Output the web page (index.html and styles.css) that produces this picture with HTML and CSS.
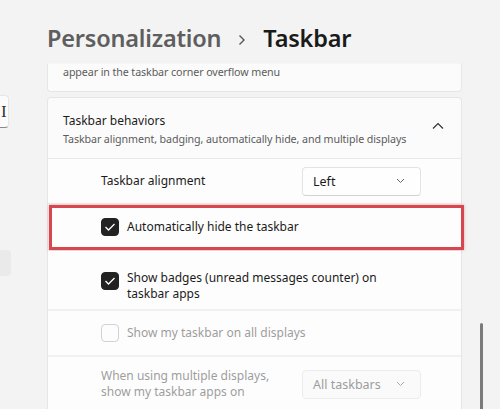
FILE: index.html
```html
<!DOCTYPE html>
<html lang="en">
<head>
	<meta charset="UTF-8">
	<title>Taskbar</title>
	<link rel="stylesheet" href="styles.css">
</head>
<body>
	<div class="page">
		<div class="sidebar">
			<div class="search"><span class="caret">I</span></div>
			<div class="nav-item"></div>
		</div>
		<div class="main">
			<h1 class="crumbs">
				<span class="parent">Personalization</span>
				<svg class="crumb-sep" width="8" height="12" viewBox="0 0 8 12"><path d="M1.5 1.5 L6 6 L1.5 10.5" fill="none" stroke="#555" stroke-width="1.4"/></svg>
				<span class="current">Taskbar</span>
			</h1>
			<div class="card card-cut">
				<p class="desc">appear in the taskbar corner overflow menu</p>
			</div>
			<div class="card expander">
				<div class="exp-head">
					<div>
						<div class="title">Taskbar behaviors</div>
						<div class="desc">Taskbar alignment, badging, automatically hide, and multiple displays</div>
					</div>
					<svg class="chev-up" width="12" height="8" viewBox="0 0 12 8"><path d="M1 6.5 L6 1.5 L11 6.5" fill="none" stroke="#333" stroke-width="1.2"/></svg>
				</div>
				<div class="row">
					<span class="label">Taskbar alignment</span>
					<div class="select">
						<span>Left</span>
						<svg width="9" height="6" viewBox="0 0 9 6"><path d="M1 1 L4.5 4.5 L8 1" fill="none" stroke="#666" stroke-width="1"/></svg>
					</div>
				</div>
				<div class="row row-check marked">
					<span class="box checked"><svg width="12" height="10" viewBox="0 0 12 10"><path d="M1.5 5 L4.5 8 L10.5 2" fill="none" stroke="#fff" stroke-width="1.3"/></svg></span>
					<span class="label">Automatically hide the taskbar</span>
				</div>
				<div class="row row-check tall">
					<span class="box checked"><svg width="12" height="10" viewBox="0 0 12 10"><path d="M1.5 5 L4.5 8 L10.5 2" fill="none" stroke="#fff" stroke-width="1.3"/></svg></span>
					<span class="label">Show badges (unread messages counter) on<br>taskbar apps</span>
				</div>
				<div class="row row-check off">
					<span class="box"></span>
					<span class="label">Show my taskbar on all displays</span>
				</div>
				<div class="row off last">
					<span class="label">When using multiple displays,<br>show my taskbar apps on</span>
					<div class="select">
						<span>All taskbars</span>
						<svg width="9" height="6" viewBox="0 0 9 6"><path d="M1 1 L4.5 4.5 L8 1" fill="none" stroke="#aaa" stroke-width="1"/></svg>
					</div>
				</div>
			</div>
		</div>
		<div class="scroll">
			<div class="thumb"></div>
		</div>
	</div>
</body>
</html>
```

FILE: styles.css
```css
*{
	margin: 0;
	padding: 0;
	box-sizing: border-box;
}
body{
	background: #f3f3f3;
	font-family: "Noto Sans", "Open Sans", sans-serif;
	color: #1b1b1b;
	overflow: hidden;
}
.page{
	display: flex;
	width: 500px;
	height: 409px;
}
.sidebar{
	width: 11px;
	flex-shrink: 0;
}
.search{
	margin-top: 95px;
	width: 9px;
	height: 33px;
	background: #fbfbfb;
	border: 1px solid #e6e6e6;
	border-left: none;
	border-bottom: 1px solid #8a8a8a;
	border-radius: 0 4px 4px 0;
	display: flex;
	align-items: center;
	padding-left: 1px;
}
.caret{
	font-family: "Liberation Serif", serif;
	font-size: 17px;
	color: #333;
	line-height: 1;
}
.nav-item{
	margin-top: 122px;
	width: 11px;
	height: 26px;
	background: #eaeaea;
	border-radius: 0 4px 4px 0;
}
.main{
	margin-left: 36px;
	width: 415px;
	flex-shrink: 0;
}
.crumbs{
	height: 63px;
	display: flex;
	align-items: center;
	padding-top: 13px;
	font-size: 23.5px;
	font-weight: 600;
	letter-spacing: -0.2px;
}
.parent{
	color: #5e5e5e;
}
.crumb-sep{
	margin: 3px 17px 0 17px;
}
.current{
	color: #1a1a1a;
}
.card{
	background: #fbfbfb;
	border: 1px solid #e6e6e6;
	border-radius: 4px;
}
.card-cut{
	height: 29px;
	border-top-color: #f6f6f6;
	border-radius: 0 0 4px 4px;
	padding: 1px 0 0 15px;
}
.desc{
	font-size: 10.7px;
	color: #5c5c5c;
	letter-spacing: -0.1px;
}
.expander{
	margin-top: 5px;
	height: 320px;
	border-radius: 4px 4px 0 0;
	border-bottom: none;
}
.exp-head{
	height: 61px;
	display: flex;
	align-items: center;
	justify-content: space-between;
	padding: 0 17px 0 15px;
	border-bottom: 1px solid #e9e9e9;
}
.title{
	font-size: 12px;
	color: #1b1b1b;
	margin-bottom: 3px;
	padding-top: 2px;
}
.chev-up{
	margin-top: -4px;
}
.row{
	display: flex;
	align-items: center;
	justify-content: space-between;
	height: 46px;
	padding: 0 40px 0 53px;
	border-bottom: 2px solid #f1f1f1;
	background: #fdfdfd;
	position: relative;
}
.label{
	font-size: 12px;
	color: #1b1b1b;
	line-height: 16px;
}
.select{
	width: 119px;
	height: 29px;
	background: #fefefe;
	border: 1px solid #e3e3e3;
	border-bottom-color: #d3d3d3;
	border-radius: 4px;
	display: flex;
	align-items: center;
	justify-content: space-between;
	padding: 0 15px 0 10px;
	font-size: 12.5px;
}
.row-check{
	justify-content: flex-start;
	gap: 8px;
}
.row-check.tall{
	height: 60px;
	align-items: flex-start;
	padding-top: 21px;
}
.row-check.tall .label{
	margin-top: -2px;
}
.box{
	width: 18px;
	height: 18px;
	border-radius: 4px;
	border: 1px solid #c6c6c6;
	background: #fdfdfd;
	flex-shrink: 0;
	display: flex;
	align-items: center;
	justify-content: center;
}
.box.checked{
	background: #222;
	border-color: #222;
}
.off .label,
.off .select span{
	color: #9d9d9d;
}
.off .box{
	border-color: #d2d2d2;
}
.off .select{
	border-color: #ececec;
	background: #fafafa;
}
.row.last{
	border-bottom: none;
	height: 52px;
	padding-top: 2px;
}
.marked::after{
	content: "";
	position: absolute;
	left: 1px;
	right: -3px;
	top: 0;
	bottom: -1px;
	border: 3px solid #d8474f;
	box-shadow: 0 0 3px rgba(200, 60, 70, 0.4);
}
.scroll{
	margin-left: 18px;
	padding-top: 323px;
}
.thumb{
	width: 3px;
	height: 90px;
	background: #7a7a7a;
	border-radius: 2px;
}
```
